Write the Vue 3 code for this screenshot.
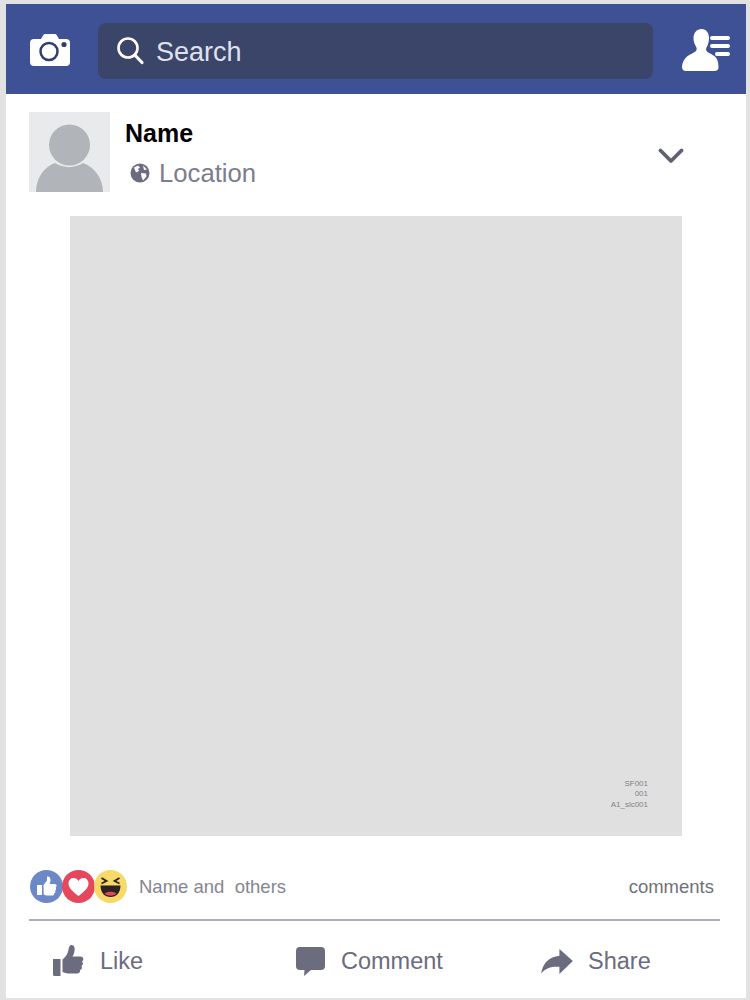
<template>
  <div class="card">
    <header class="topbar">
      <svg class="camera" width="40" height="32" viewBox="0 0 40 32">
        <path d="M4 5h7l2.500-4.200Q14 0 15 0h10q1 0 1.500.8L29 5h7q4 0 4 4v19q0 4-4 4H4q-4 0-4-4V9q0-4 4-4z" fill="#fff" />
        <circle cx="19" cy="17.500" r="8.500" fill="none" stroke="#2f4070" stroke-width="2.500" />
        <circle cx="34" cy="10.500" r="2.600" fill="#2f4070" />
      </svg>
      <div class="search">
        <svg width="30" height="30" viewBox="0 0 30 30">
          <circle cx="13" cy="12" r="9.500" fill="none" stroke="#fff" stroke-width="2.600" />
          <path d="M19.800 19l7.200 7.500" fill="none" stroke="#fff" stroke-width="3.200" stroke-linecap="round" />
        </svg>
        <span class="search-label">Search</span>
      </div>
      <svg class="requests" width="48" height="43" viewBox="0 0 48 43">
        <path d="M19.500 0c5 0 7.500 4 7.500 9 0 3.500-1 7-2.500 9.500-.8 1.500-.5 3.500 1 4.500 2 1.500 5 2.500 7.500 4.500 2.500 2.500 3.500 6 3.500 11 0 2-1.500 3.500-4 3.500H4c-3 0-4-2-4-4 0-4 2-8 5-10.500 3-2.500 6.500-3.500 8.500-5 1.300-1 1.500-3 .7-4.500C12.500 15 11.500 12.500 11.500 9c0-5 3-9 8-9z" fill="#fff" />
        <path d="M30 9h16M30 17h16M35 25h11" stroke="#fff" stroke-width="4" stroke-linecap="round" />
      </svg>
    </header>

    <section class="author">
      <div class="avatar">
        <svg width="81" height="80" viewBox="0 0 81 80">
          <circle cx="40.500" cy="33" r="20.500" fill="#b1b5b9" />
          <path d="M7 80c0-14 8-25 19-29 8 5.500 20 5.500 28 0 11 4 20 15 20 29z" fill="#b1b5b9" />
        </svg>
      </div>
      <div class="who">
        <div class="name">Name</div>
        <div class="place">
          <svg width="20" height="20" viewBox="0 0 20 20">
            <circle cx="10" cy="10" r="9.500" fill="#6b6c7e" />
            <path d="M4 4.500l4-2 2 2-2 1.500 1 2-3 1.500zM11 10l5 .5.500 3-3.500 4-1.500-3.500zM13 2.500l4 4-3 .5z" fill="#fff" />
          </svg>
          <span>Location</span>
        </div>
      </div>
      <svg class="chevron" width="26" height="16" viewBox="0 0 26 16">
        <path d="M2.500 2.500L13 13 23.500 2.500" fill="none" stroke="#5f6073" stroke-width="3.800" stroke-linecap="round" stroke-linejoin="round" />
      </svg>
    </section>

    <div class="photo">
      <div class="code">SF001<br />001<br />A1_slc001</div>
    </div>

    <div class="stats">
      <div class="reactions">
        <svg width="33" height="33" viewBox="0 0 33 33">
          <circle cx="16.500" cy="16.500" r="16.500" fill="#6d88c6" />
          <path d="M7 15h5v10H7zM13.500 15l3.500-4.500V6.500c2.500-.5 3.500 1.500 3.500 3.500 0 1.500-.5 3-1 4h5.500c2 0 2 3 .5 3.500 1 1 .8 2.500-.3 3 .5 1.500 0 2.500-1 3 0 1.500-1 2-2 2h-5c-1.500 0-2-.5-3.500-1z" fill="#fff" />
        </svg>
        <svg class="next" width="33" height="33" viewBox="0 0 33 33">
          <circle cx="16.500" cy="16.500" r="16.500" fill="#e5475c" />
          <path d="M16.500 26C12 22.500 6.500 18.500 6.500 13.500 6.500 10 9 8 11.500 8c2.200 0 4 1.200 5 3 1-1.800 2.800-3 5-3 2.500 0 5 2 5 5.500 0 5-5.500 9-10 12.500z" fill="#fff" />
        </svg>
        <svg class="next" width="33" height="33" viewBox="0 0 33 33">
          <circle cx="16.500" cy="16.500" r="16.500" fill="#f6d968" />
          <path d="M6.500 15.500h20c0 7-4 11.500-10 11.500S6.500 22.500 6.500 15.500z" fill="#2b2320" />
          <path d="M10.500 23.500c3-2.500 9-2.500 12 0-3 3-9 3-12 0z" fill="#e5475c" />
          <path d="M7.500 8l5 3-5 2.500M25.500 8l-5 3 5 2.500" fill="none" stroke="#2b2320" stroke-width="1.800" />
        </svg>
      </div>
      <span class="names">Name and&nbsp; others</span>
      <span class="comments">comments</span>
    </div>

    <div class="actions">
      <div class="action">
        <svg width="32" height="32" viewBox="0 0 32 32">
          <path d="M1 14h7.500v17H2.500Q1 31 1 29.500z" fill="#6b6c7e" />
          <path d="M10.500 14.500c3-2.500 5.500-6 6-9.500.3-2.500 1-5 3-5 2.800 0 3.500 3 3 6-.3 2-1 4-2 5.500h8c3.500 0 3.500 4 1.500 5 1.500 1.500 1.200 3.500-.5 4.500 1 1.800.3 3.500-1.500 4 .5 2-1 3.500-3 3.500h-9c-2 0-3.500-1-5.500-1.500z" fill="#6b6c7e" />
        </svg>
        <span>Like</span>
      </div>
      <div class="action">
        <svg width="29" height="29" viewBox="0 0 29 29">
          <path d="M4 0h21q4 0 4 4v15q0 4-4 4H15l-7 6 .5-6H4q-4 0-4-4V4q0-4 4-4z" fill="#6b6c7e" />
        </svg>
        <span>Comment</span>
      </div>
      <div class="action">
        <svg width="32" height="25" viewBox="0 0 33 26">
          <path d="M19 0l14 12.500L19 26v-7.500C11 18 5 19.500 0 25.500 1.500 15 8 8 19 7z" fill="#6b6c7e" />
        </svg>
        <span>Share</span>
      </div>
    </div>
  </div>
</template>

<script setup>
</script>

<style scoped>
.card {
  height: 994px;
  margin: 4px 4px 0 6px;
  background: #fff;
  font-family: "Liberation Sans", Arial, sans-serif;
  color: #6b6c7e;
}
.topbar {
  height: 90px;
  background: #3d5194;
  display: flex;
  align-items: center;
  padding-left: 24px;
  box-sizing: border-box;
}
.camera { margin-top: 2px; flex-shrink: 0; }
.search {
  width: 555px;
  height: 56px;
  margin: 3px 29px 0 28px;
  padding-left: 17px;
  box-sizing: border-box;
  background: #3b4469;
  border-radius: 8px;
  display: flex;
  align-items: center;
  gap: 11px;
  color: #dfe2ee;
  font-size: 27px;
}
.search-label { margin-top: 4px; }
.requests { flex-shrink: 0; margin-top: 3px; }
.author {
  height: 122px;
  padding: 18px 0 0 23px;
  box-sizing: border-box;
  display: flex;
  align-items: flex-start;
}
.avatar {
  width: 81px;
  height: 80px;
  background: #e8eaec;
  flex-shrink: 0;
}
.avatar svg { display: block; }
.who { margin-left: 15px; width: 533px; }
.name {
  font-size: 25px;
  font-weight: 700;
  color: #000;
  line-height: 29px;
  margin-top: 7px;
}
.place {
  display: flex;
  align-items: center;
  gap: 9px;
  margin: 10px 0 0 5px;
  font-size: 25.7px;
  line-height: 30px;
  color: #7c7d8d;
}
.chevron { margin-top: 36px; flex-shrink: 0; }
.photo {
  width: 612px;
  height: 620px;
  margin-left: 64px;
  padding: 0 34px 26px 0;
  box-sizing: border-box;
  background: #e0e0e0;
  display: flex;
  justify-content: flex-end;
  align-items: flex-end;
}
.code {
  text-align: right;
  font-size: 8px;
  line-height: 10.500px;
  color: #808088;
}
.stats {
  height: 85px;
  margin: 0 26px 0 23px;
  padding-top: 17px;
  box-sizing: border-box;
  border-bottom: 2px solid #aeaeb8;
  display: flex;
  align-items: center;
  font-size: 18.500px;
}
.reactions { display: flex; margin-left: 1px; }
.next { margin-left: -1px; }
.names { margin: 2px 0 0 12px; flex: 1; color: #85868f; }
.comments { margin: 2px 6px 0 0; color: #707178; }
.actions {
  display: grid;
  grid-template-columns: 244px 245px 1fr;
  padding: 6px 0 0 46px;
}
.action {
  display: flex;
  align-items: center;
  height: 68px;
  font-size: 23.500px;
}
.action:nth-child(1) { gap: 16px; }
.action:nth-child(2) { gap: 16px; }
.action:nth-child(3) { gap: 15px; }
</style>

<style>
body { background: #e2e2e2; }
</style>
